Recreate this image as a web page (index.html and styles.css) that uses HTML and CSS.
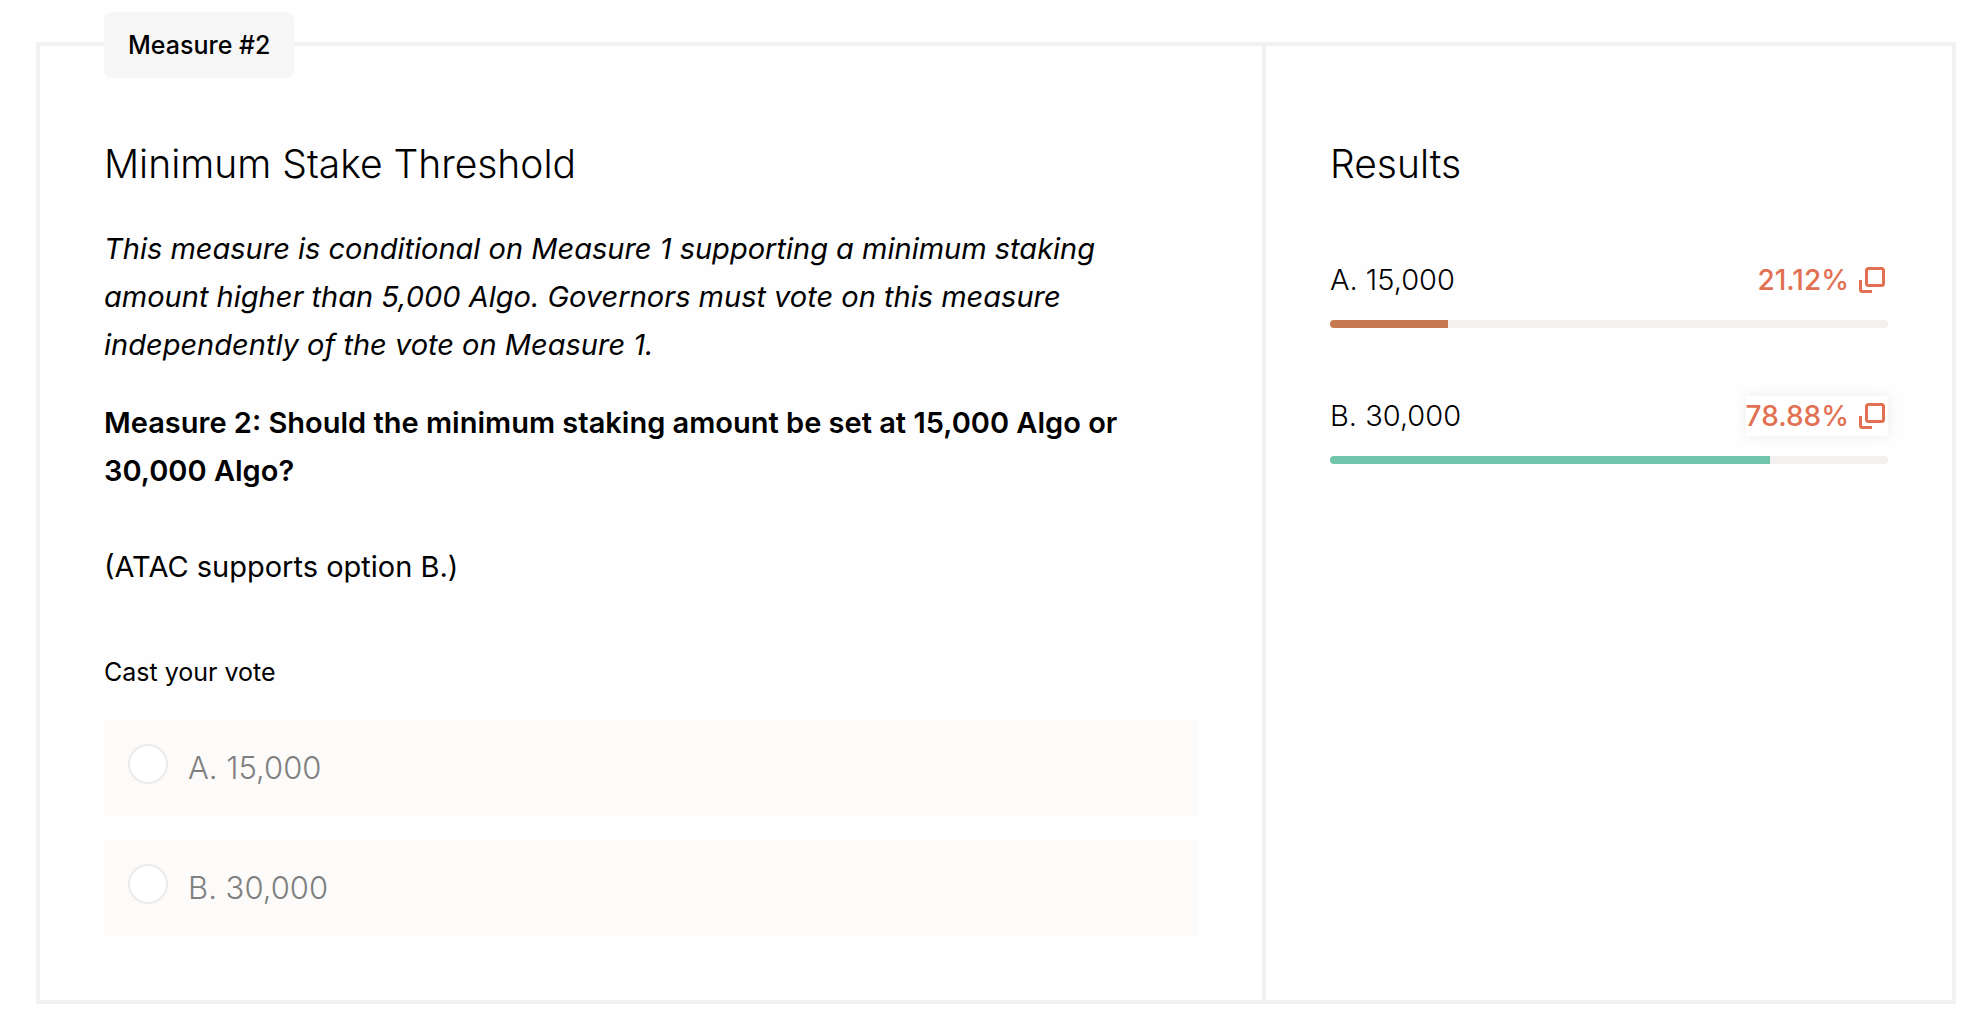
FILE: index.html
```html
<!DOCTYPE html>
<html lang="en">
<head>
<meta charset="utf-8">
<meta name="viewport" content="width=device-width, initial-scale=1">
<title>Measure #2</title>
<link rel="stylesheet" href="styles.css">
</head>
<body>
<main class="measure">
  <span class="badge">Measure #2</span>
  <section class="details">
    <h2 class="title">Minimum Stake Threshold</h2>
    <div class="copy">
      <p><em>This measure is conditional on Measure 1 supporting a minimum staking<br>amount higher than 5,000 Algo. Governors must vote on this measure<br>independently of the vote on Measure 1.</em></p>
      <p class="question"><strong>Measure 2: Should the minimum staking amount be set at 15,000 Algo or<br>30,000 Algo?</strong></p>
      <p class="note">(ATAC supports option B.)</p>
    </div>
    <fieldset class="vote">
      <legend class="legend">Cast your vote</legend>
      <label class="option"><input class="radio" type="radio" name="vote" value="a" disabled><span class="option-text">A. 15,000</span></label>
      <label class="option"><input class="radio" type="radio" name="vote" value="b" disabled><span class="option-text">B. 30,000</span></label>
    </fieldset>
  </section>
  <section class="results">
    <h2 class="title">Results</h2>
    <div class="result">
      <div class="result-row">
        <span>A. 15,000</span>
        <button class="share" type="button">21.12%
          <svg class="icon" viewBox="0 0 26 26" aria-hidden="true"><rect x="7.5" y="1.5" width="17" height="17" rx="2"/><path d="M1.500 13v9.500a2 2 0 0 0 2 2H13"/></svg>
        </button>
      </div>
      <div class="track"><div class="fill fill-a" style="width: 21.12%"></div></div>
    </div>
    <div class="result">
      <div class="result-row">
        <span>B. 30,000</span>
        <button class="share share-active" type="button">78.88%
          <svg class="icon" viewBox="0 0 26 26" aria-hidden="true"><rect x="7.5" y="1.5" width="17" height="17" rx="2"/><path d="M1.500 13v9.500a2 2 0 0 0 2 2H13"/></svg>
        </button>
      </div>
      <div class="track"><div class="fill fill-b" style="width: 78.88%"></div></div>
    </div>
  </section>
</main>
</body>
</html>
```
FILE: styles.css
```css
* {
  box-sizing: border-box;
}

body {
  margin: 0;
  padding: 42px 31px 32px 36px;
  background: #fefefe;
  color: #000;
  font-family: Inter, "Open Sans", sans-serif;
  font-size: 29px;
  font-weight: 300;
  line-height: 48px;
}

.measure {
  position: relative;
  display: grid;
  grid-template-columns: 1226fr 686fr;
  border: 4px solid #f2f1ef;
}

.badge {
  position: absolute;
  top: -34px;
  left: 64px;
  padding: 9px 24px;
  border-radius: 8px;
  background: #f6f6f6;
  font-size: 25px;
  font-weight: 500;
}

.details {
  padding: 88px 64px 64px;
  border-right: 4px solid #f2f1ef;
}

.results {
  padding: 88px 64px 64px;
}

.title {
  margin: 0;
  font-size: 39px;
  font-weight: 350;
  line-height: 60px;
}

.copy {
  margin-top: 31px;
  font-weight: 400;
}

.copy p {
  margin: 0;
}

.copy .question {
  margin-top: 30px;
}

.copy .note {
  margin-top: 48px;
}

.question strong {
  font-weight: 600;
}

.vote {
  display: flex;
  flex-direction: column;
  gap: 24px;
  margin: 57px 0 0;
  padding: 0;
  border: 0;
}

.legend {
  margin-bottom: 24px;
  padding: 0;
  font-size: 25px;
  font-weight: 400;
}

.option {
  display: flex;
  gap: 20px;
  height: 96px;
  padding: 24px;
  background: #fcfbf9;
  color: #808080;
  font-size: 31px;
}

.radio {
  appearance: none;
  width: 40px;
  height: 40px;
  margin: 0;
  border: 2px solid #ebebe9;
  border-radius: 50%;
  background: #fff;
}

.result {
  margin-top: 58px;
}

.title + .result {
  margin-top: 56px;
}

.result-row {
  display: flex;
  align-items: center;
  justify-content: space-between;
  height: 60px;
}

.share {
  display: flex;
  align-items: center;
  gap: 10px;
  height: 40px;
  padding: 0 3px 0 0;
  border: 0;
  background: transparent;
  color: #e27052;
  font: inherit;
  font-size: 28px;
  font-weight: 500;
}

.share-active {
  background: #fff;
  box-shadow: 0 0 12px rgba(0, 0, 0, 0.08);
}

.icon {
  width: 26px;
  height: 26px;
  fill: none;
  stroke: currentColor;
  stroke-width: 3;
}

.track {
  height: 8px;
  margin-top: 10px;
  overflow: hidden;
  border-radius: 4px;
  background: #f2f1ef;
}

.fill {
  height: 100%;
}

.fill-a {
  background: #c7794f;
}

.fill-b {
  background: #6fc5aa;
}
```
